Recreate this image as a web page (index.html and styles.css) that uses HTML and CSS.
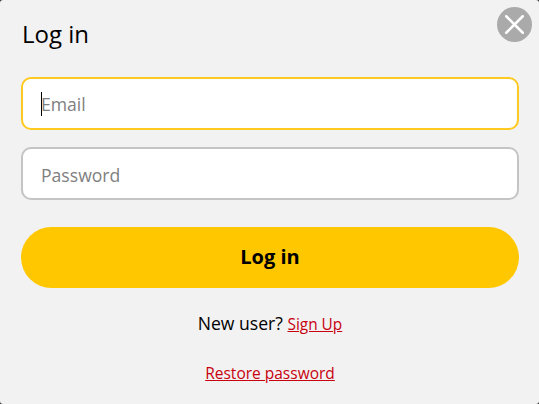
FILE: index.html
```html
<!DOCTYPE html>
<html lang="en">
<head>
<meta charset="utf-8">
<title>Log in</title>
<link rel="stylesheet" href="styles.css">
</head>
<body>
<main class="dialog">
  <button class="close" type="button" aria-label="Close">
    <svg viewBox="0 0 36 36" width="36" height="36"><path d="M9.5 9.5 26.5 26.5M26.5 9.5 9.5 26.5" fill="none" stroke="#fff" stroke-width="2.6" stroke-linecap="round"/></svg>
  </button>
  <h1 class="title">Log in</h1>
  <form class="form">
    <div class="field field-focus">
      <input class="input" type="email" placeholder="Email">
      <span class="caret"></span>
    </div>
    <div class="field">
      <input class="input input-low" type="password" placeholder="Password">
    </div>
    <button class="submit" type="button">Log in</button>
  </form>
  <p class="signup">New user? <a href="#">Sign Up</a></p>
  <p class="restore"><a href="#">Restore password</a></p>
</main>
</body>
</html>
```
FILE: styles.css
```css
* { box-sizing: border-box; }
html, body { margin: 0; height: 100%; background: #333; }
body { font-family: "Open Sans", "Liberation Sans", sans-serif; color: #000; overflow: hidden; }
.dialog { position: relative; width: 539px; height: 404px; padding: 16px 20px 0 21px; background: #f2f2f2; border-radius: 3px; }
.close { position: absolute; top: 7px; right: 7px; width: 35px; height: 35px; padding: 0; border: 0; border-radius: 50%; background: #aaa; display: flex; }
.close svg { width: 35px; height: 35px; }
.title { margin: 0 0 26px 1px; font-size: 24px; font-weight: 400; line-height: 35px; }
.form { display: flex; flex-direction: column; }
.field { position: relative; margin-bottom: 17px; }
.input { display: block; width: 100%; height: 53px; padding: 0 18px; border: 2px solid #c4c4c4; border-radius: 10px; background: #fff; font: 400 17.6px "Open Sans", "Liberation Sans", sans-serif; outline: none; }
.input-low { padding-top: 2px; }
.input::placeholder { color: #808080; opacity: 1; }
.field-focus .input { border-color: #ffc91f; }
.caret { position: absolute; left: 20px; top: 15px; width: 1px; height: 24px; background: #000; }
.submit { height: 61px; margin-top: 10px; padding: 0 0 2px; border: 0; border-radius: 31px; background: #ffc700; color: #000; font: 700 20px "Open Sans", "Liberation Sans", sans-serif; }
.signup { margin: 23px 0 0; font-size: 17.6px; line-height: 24px; text-align: center; }
.signup a { font-size: 15.4px; }
.restore { margin: 24px 0 0; font-size: 15.5px; line-height: 24px; text-align: center; }
a { color: #c8000f; }
```
